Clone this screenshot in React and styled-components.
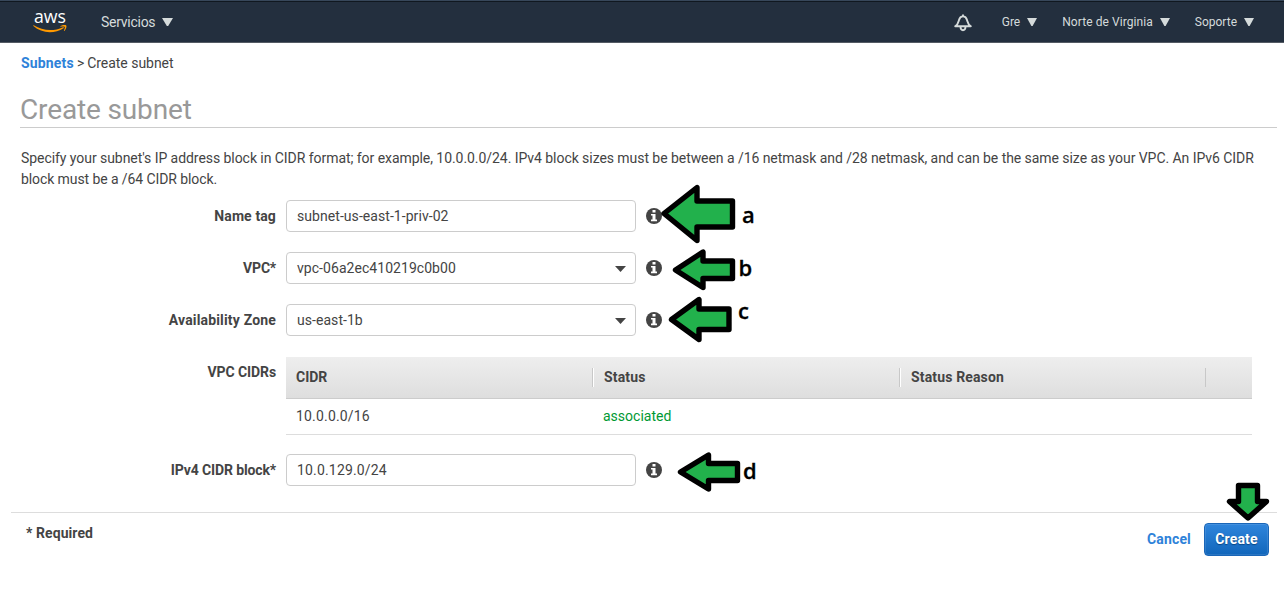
import React from "react";
import styled, { createGlobalStyle } from "styled-components";

const GlobalStyle = createGlobalStyle`
  * { box-sizing: border-box; }
  body {
    margin: 0;
    background: #fff;
    color: #444;
    font: 400 14px/21px Roboto, "Liberation Sans", sans-serif;
  }
`;

const Page = styled.div`
  position: relative;
  width: 1284px;
  height: 602px;
  overflow: hidden;
`;

const NavBar = styled.header`
  display: flex;
  align-items: center;
  height: 43px;
  padding: 0 30px 0 33px;
  background: #232f3e;
  border-top: 1px solid #37475a;
  border-bottom: 1px solid #545b64;
  box-shadow: inset 0 1px 0 #101820;
`;

const Logo = styled.svg`
  display: block;
  width: 36px;
  height: 40px;
  margin-right: 32px;
  text {
    font: 500 19px "Open Sans", sans-serif;
    fill: #fff;
  }
`;

const NavItem = styled.div`
  display: flex;
  align-items: center;
  gap: 7px;
  padding-top: 2px;
  margin-right: ${(p) => p.$after || 0}px;
  color: #d5dbdb;
  font-size: ${(p) => (p.$large ? 14 : 12)}px;
  letter-spacing: ${(p) => p.$track || 0}px;
`;

const Triangle = styled.svg`
  display: block;
  width: ${(p) => p.$w}px;
  height: 8px;
  margin-top: -1px;
  fill: #d5dbdb;
`;

const Bell = styled.svg`
  display: block;
  width: 18px;
  height: 18px;
  margin: 3px 30px 0 auto;
  fill: none;
  stroke: #d5dbdb;
  stroke-width: 1.9;
  stroke-linejoin: round;
`;

const Breadcrumb = styled.nav`
  padding: 10px 0 0 21px;
  letter-spacing: -0.03px;
`;

const Link = styled.a`
  color: #2e82d9;
  font-weight: 700;
  letter-spacing: 0.17px;
`;

const Separator = styled.span`
  margin: 0 3px;
`;

const Title = styled.h1`
  height: 34px;
  margin: 20px 7px 0 20px;
  border-bottom: 1px solid #ccc;
  color: #999;
  font-size: 28px;
  font-weight: 400;
  line-height: 32px;
  letter-spacing: -0.14px;
`;

const Intro = styled.p`
  margin: 20px 0 0 21px;
  white-space: nowrap;
`;

const Line = styled.span`
  display: block;
  letter-spacing: ${(p) => p.$track || 0}px;
`;

const Form = styled.form`
  display: flex;
  flex-direction: column;
  gap: 20px;
  margin-top: 10px;
`;

const Row = styled.div`
  display: flex;
  align-items: center;
`;

const TableRow = styled(Row)`
  align-items: flex-start;
  margin: 1px 0 -1px;
`;

const Label = styled.label`
  width: 276px;
  margin-right: 10px;
  padding-top: ${(p) => p.$top || 0}px;
  font-weight: 700;
  text-align: right;
  letter-spacing: ${(p) => p.$track || 0}px;
`;

const Field = styled.div`
  display: flex;
  align-items: center;
  justify-content: space-between;
  width: 350px;
  height: 32px;
  margin-right: 10px;
  padding: 0 9px 0 10px;
  border: 1px solid #ccc;
  border-radius: 4px;
  letter-spacing: ${(p) => p.$track || 0}px;
`;

const Caret = styled.svg`
  display: block;
  width: 11px;
  height: 6px;
  margin-top: 1px;
  fill: #444;
`;

const InfoSvg = styled.svg`
  display: block;
  width: 16px;
  height: 16px;
`;

const Table = styled.div`
  width: 966px;
`;

const TableHead = styled.div`
  display: flex;
  align-items: center;
  height: 42px;
  background: linear-gradient(#eee, #dedede);
  border-bottom: 1px solid #ccc;
  font-weight: 700;
`;

const HeadCell = styled.div`
  width: ${(p) => p.$w}px;
  height: 19px;
  padding-left: ${(p) => p.$pad || 10}px;
  border-right: 1px solid #c8c8c8;
  box-shadow: 1px 0 0 ${(p) => (p.$last ? "transparent" : "#fff")};
  line-height: 19px;
  letter-spacing: ${(p) => p.$track || 0}px;
`;

const TableBody = styled.div`
  display: flex;
  align-items: center;
  height: 36px;
  border-bottom: 1px solid #ddd;
`;

const Cell = styled.div`
  width: 307px;
  padding-left: 10px;
  color: ${(p) => (p.$ok ? "#093" : "#444")};
  letter-spacing: ${(p) => p.$track || 0}px;
`;

const Footer = styled.footer`
  display: flex;
  align-items: flex-start;
  margin: 26px 7px 0 11px;
  padding: 10px 8px 0 15px;
  border-top: 1px solid #ddd;
`;

const Required = styled.div`
  margin-right: auto;
  font-weight: 700;
  letter-spacing: 0.08px;
`;

const Cancel = styled(Link)`
  margin: 6px 13px 0 0;
`;

const CreateButton = styled.button`
  width: 65px;
  height: 33px;
  padding: 0 0 2px;
  border: 1px solid #1a66b8;
  border-radius: 4px;
  background: linear-gradient(#2f85dc, #1166bb);
  box-shadow: inset 0 0 0 1px rgba(255, 255, 255, 0.1);
  color: #fff;
  font: 700 14px Roboto, sans-serif;
  letter-spacing: 0.15px;
  text-shadow: 0 1px 1px #0a4684;
`;

const Annotations = styled.svg`
  position: absolute;
  inset: 0;
  pointer-events: none;
  polygon {
    fill: #22b14c;
    stroke: #000;
    stroke-width: 5.4;
    stroke-linejoin: round;
  }
  text {
    font: 600 22px "Open Sans", sans-serif;
    fill: #000;
    stroke: #000;
    stroke-width: 0.3;
  }
`;

const Down = ({ w }) => (
  <Triangle $w={w} viewBox="0 0 10 8" preserveAspectRatio="none">
    <path d="M0 0h10L5.6 8H4.4z" />
  </Triangle>
);

const Info = () => (
  <InfoSvg viewBox="0 0 16 16">
    <circle cx="8" cy="8" r="8" fill="#444" />
    <path fill="#fff" d="M6.500 2h3v2.500h-3zM5 6h4.500v5.500H11v1.800H5v-1.800h1.500v-4H5z" />
  </InfoSvg>
);

const Select = ({ children, track }) => (
  <Field $track={track}>
    <span>{children}</span>
    <Caret viewBox="0 0 11 6">
      <path d="M0 0h11L5.5 6z" />
    </Caret>
  </Field>
);

const arrows = [
  "664,213.5 697,187.5 697,201 732.5,201 732.5,227 697,227 697,240.5",
  "675.5,270 703,252 703,261 732.5,261 732.5,278.5 703,278.5 703,287.5",
  "671.5,319.5 699,299.5 699,309 729,309 729,329.5 699,329.5 699,339.5",
  "680.5,472 708.5,455 708.5,463.5 737.5,463.5 737.5,480.5 708.5,480.5 708.5,489",
  "1238.5,485.5 1257.5,485.5 1257.5,501.5 1266.5,501.5 1248,518 1229.5,501.5 1238.5,501.5",
];

const letters = [
  ["a", 742, 223],
  ["b", 738.5, 276],
  ["c", 738, 319],
  ["d", 743, 479],
];

export default function App() {
  return (
    <Page>
      <GlobalStyle />
      <NavBar>
        <Logo viewBox="0 -7 36 40">
          <text x="1" y="13.7" textLength="32" lengthAdjust="spacingAndGlyphs">aws</text>
          <path
            fill="#f90"
            d="M.8 16.300C9.500 22 21 22.500 30 18.200c.8-.2 1.200.5.500 1C21.500 25 8.500 24.500.4 17c-.4-.4 0-.9.4-.7z"
          />
          <path
            fill="#f90"
            d="M27.300 17.200c1.900-1.400 5.300-1.500 6-.8.600.800-.2 4-1.900 5.500-.3.200-.6 0-.5-.3.500-1.200 1.300-3.200.9-3.700-.500-.600-2.900-.3-4.100-.1-.500 0-.6-.4-.4-.6z"
          />
        </Logo>
        <NavItem $large $track={-0.27}>Servicios <Down w={11} /></NavItem>
        <Bell viewBox="0 0 18 18">
          <path d="M9 .5v2M1.200 12.300C4 10.500 4.300 8.500 5 6c.6-2.300 2-3.600 4-3.600s3.400 1.300 4 3.600c.7 2.500 1 4.500 3.800 6.300zM6.500 13c.2 4.300 4.800 4.300 5 0" />
        </Bell>
        <NavItem $after={25}>Gre <Down w={10} /></NavItem>
        <NavItem $after={25} $track={0.07}>Norte de Virginia <Down w={10} /></NavItem>
        <NavItem>Soporte <Down w={10} /></NavItem>
      </NavBar>
      <Breadcrumb>
        <Link>Subnets</Link>
        <Separator>&gt;</Separator>
        Create subnet
      </Breadcrumb>
      <Title>Create subnet</Title>
      <Intro>
        <Line $track={-0.055}>
          Specify your subnet's IP address block in CIDR format; for example, 10.0.0.0/24. IPv4 block sizes must be between a /16 netmask and /28 netmask, and can be the same size as your VPC. An IPv6 CIDR
        </Line>
        <Line $track={-0.09}>block must be a /64 CIDR block.</Line>
      </Intro>
      <Form>
        <Row>
          <Label $track={0.12}>Name tag</Label>
          <Field $track={0.06}>subnet-us-east-1-priv-02</Field>
          <Info />
        </Row>
        <Row>
          <Label $track={-0.2}>VPC*</Label>
          <Select track={0.05}>vpc-06a2ec410219c0b00</Select>
          <Info />
        </Row>
        <Row>
          <Label $track={0.17}>Availability Zone</Label>
          <Select track={0.05}>us-east-1b</Select>
          <Info />
        </Row>
        <TableRow>
          <Label $top={5} $track={-0.1}>VPC CIDRs</Label>
          <Table>
            <TableHead>
              <HeadCell $w={307}>CIDR</HeadCell>
              <HeadCell $w={307} $pad={11} $track={0.15}>Status</HeadCell>
              <HeadCell $w={306} $pad={11} $track={0.15} $last>Status Reason</HeadCell>
            </TableHead>
            <TableBody>
              <Cell $track={0.18}>10.0.0.0/16</Cell>
              <Cell $ok>associated</Cell>
            </TableBody>
          </Table>
        </TableRow>
        <Row>
          <Label $track={-0.13}>IPv4 CIDR block*</Label>
          <Field $track={0.17}>10.0.129.0/24</Field>
          <Info />
        </Row>
      </Form>
      <Footer>
        <Required>* Required</Required>
        <Cancel>Cancel</Cancel>
        <CreateButton>Create</CreateButton>
      </Footer>
      <Annotations width="1284" height="602" viewBox="0 0 1284 602">
        {arrows.map((points) => (
          <polygon key={points} points={points} />
        ))}
        {letters.map(([letter, x, y]) => (
          <text key={letter} x={x} y={y}>{letter}</text>
        ))}
      </Annotations>
    </Page>
  );
}
